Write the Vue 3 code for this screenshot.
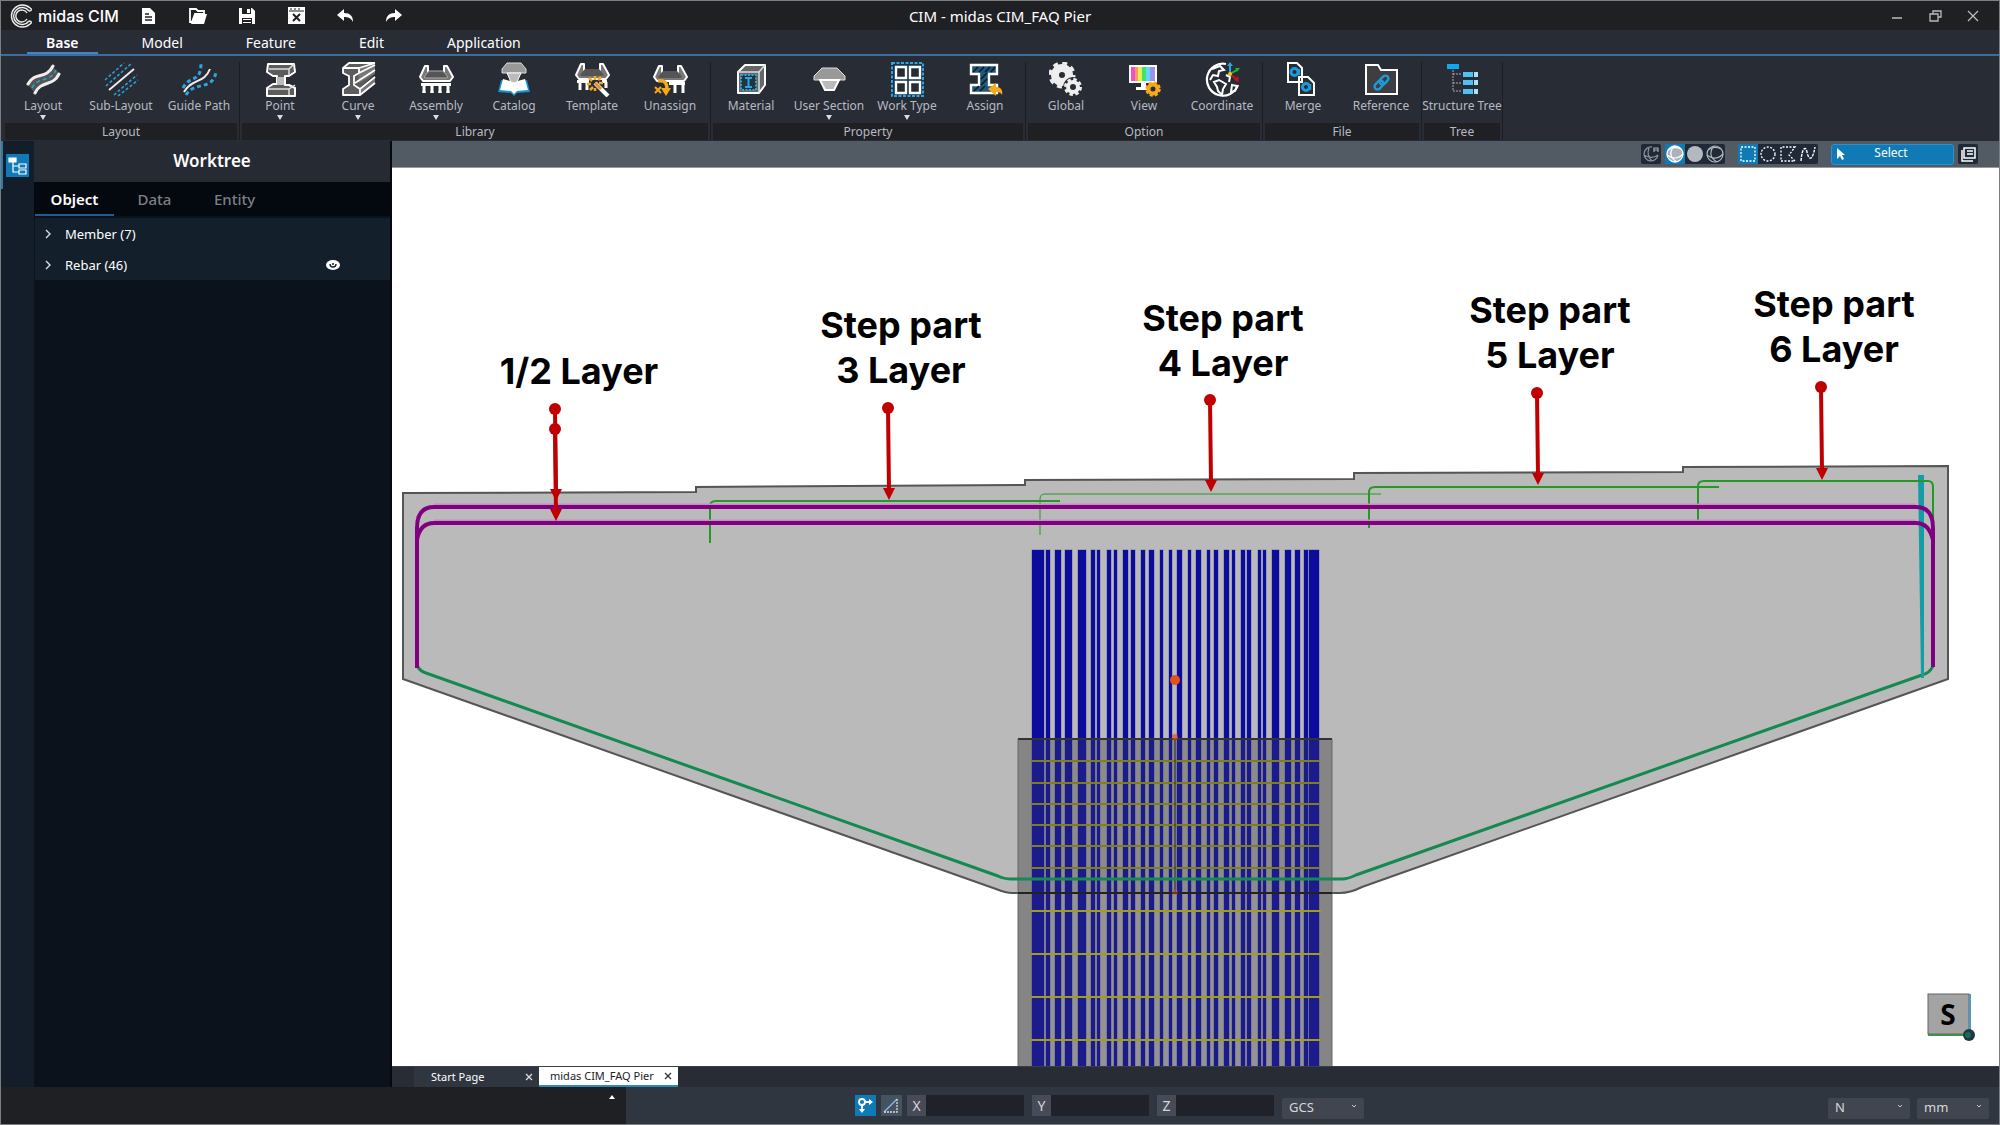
<script setup>
import { ref } from 'vue'

const icons = {
  layout: '<path d="M2 23C9 10 21 18 27 5l6 6C26 25 16 17 9 31z" fill="#555"/><path d="M2 22C9 9 20 18 27 4M9 31C15 18 27 25 33 12" fill="none" stroke="#eee" stroke-width="3" stroke-linecap="round"/><path d="M6 26C12 14 24 21 30 8" fill="none" stroke="#2b9fd4" stroke-width="1.6" stroke-dasharray="4 3"/>',
  sub: '<path d="M1 18L20 1M2 24L28 1M10 33L33 13M14 34L34 18" stroke="#2b9fd4" stroke-width="1.6" stroke-dasharray="3 2"/><path d="M5 28L30 7" stroke="#eee" stroke-width="1.8"/>',
  guide: '<path d="M1 26C8 12 19 22 19 1M4 33C12 19 32 29 34 9" fill="none" stroke="#2ba6e2" stroke-width="3" stroke-dasharray="4 3"/><path d="M2 30C10 16 22 22 28 7" fill="none" stroke="#eee" stroke-width="2"/>',
  point: '<path d="M5 2h26l1 8-6 4h-4v9h4l6 3v8H4v-8l6-4h4v-8h-4L4 10z" fill="#5c5c5c" stroke="#fff" stroke-width="2" stroke-linejoin="round"/><path d="M6 7h20l5-5M26 7v6M5 27h21l6-4M26 27v6" fill="none" stroke="#ddd" stroke-width="1.5"/><path d="M14 15h7v8h-7z" fill="#bbb"/>',
  curve: '<path d="M2 6L8 1h26v11L19 26v7H2v-6l6-4V13L2 11z" fill="#5c5c5c"/><path d="M17 7L34 1v10L18 21zM19 27l15-13v7L20 33z" fill="#777"/><path d="M2 6h16v5l-5 3v9l6 4v6H2v-6l6-4v-9l-6-3zM2 6l6-5h26M18 6l16-5M18 11L34 3M14 21L34 8M19 27l15-12M19 33l15-12" fill="none" stroke="#fff" stroke-width="1.8" stroke-linejoin="round"/>',
  assembly: '<path d="M6 4h3v6h16V4h3l6 11-3 4H4l-3-4z" fill="#777" stroke="#fff" stroke-width="2" stroke-linejoin="round"/><path d="M5 15L10 9h14l5 6-2 1H7z" fill="#555" stroke="#aaa"/><path d="M2 21h30v3H2z" fill="#fff"/><path d="M5 23v8M13 23v8M21 23v8M29 23v8" stroke="#fff" stroke-width="3"/><path d="M3 30h4M11 30h4M19 30h4M27 30h4" stroke="#fff"/>',
  catalog: '<path d="M1 30L4 18l13 3 13-3 3 12-13 1-3 3-3-3z" fill="#1592d4"/><path d="M3 28L6 17l11 3 11-3 3 11-11 1-3 3-3-3z" fill="#fff"/><path d="M10 1h14l5 6v4H5V7z" fill="#999" stroke="#ddd"/><path d="M10 11h14l-4 9-3 1-3-1z" fill="#bbb" stroke="#fff"/>',
  template: '<path d="M6 2h3v6h16V2h3l6 11-3 4H4l-3-4z" fill="#777" stroke="#fff" stroke-width="2" stroke-linejoin="round"/><path d="M5 13l5-6h14l5 6-2 1H7z" fill="#555"/><path d="M2 18h12v3H2zM27 18h5v3h-5z" fill="#fff"/><path d="M5 20v8M12 20v8M31 20v6" stroke="#fff" stroke-width="3"/><path d="M20 14v4M14 16l3 3M26 15l-3 3M12 22h4M24 21h4M15 28l3-3M20 26v3" stroke="#f7a81b" stroke-width="2.5"/><path d="M20 21l13 13" stroke="#fff" stroke-width="4"/><path d="M20 21l6 6" stroke="#e88a3c" stroke-width="3"/>',
  unassign: '<path d="M6 4h3v6h16V4h3l6 11-3 4H4l-3-4z" fill="#777" stroke="#fff" stroke-width="2" stroke-linejoin="round"/><path d="M5 15l5-6h14l5 6-2 1H7z" fill="#555"/><path d="M16 20h16v3H16z" fill="#fff"/><path d="M22 22v9M30 22v9" stroke="#fff" stroke-width="3"/><path d="M2 25l6 6M8 25l-6 6" stroke="#f7a81b" stroke-width="2"/><path d="M5 19c7-1 9 2 9 9" fill="none" stroke="#f7a81b" stroke-width="3.5"/><path d="M8 26h10l-5 8z" fill="#f7a81b"/>',
  material: '<path d="M4 10l7-7h20v20l-6 8H4z" fill="#666" stroke="#fff" stroke-width="2" stroke-linejoin="round"/><path d="M4 10h21v21M25 10l6-7" fill="none" stroke="#ddd" stroke-width="1.5"/><path d="M7 13h15v15H7z" fill="#26323c" stroke="#2ba6e2" stroke-width="2" stroke-dasharray="2 1.5"/><path d="M11 16h7M11 25h7M14.500 16v9" stroke="#2ba6e2" stroke-width="2"/>',
  section: '<path d="M10 6h15l8 8v4H2v-4z" fill="#999" stroke="#ddd"/><path d="M8 18h19l-5 10H13z" fill="#bbb" stroke="#fff" stroke-width="2"/>',
  work: '<path d="M2 1h31v33H2z" fill="#15334a" stroke="#2ba6e2" stroke-width="2" stroke-dasharray="3 1.500"/><path d="M6 5h10v11H6zM20 5h10v11H20zM6 20h10v11H6zM20 20h10v11H20z" fill="#282c35" stroke="#fff" stroke-width="2.400"/>',
  assign: '<path d="M3 3h26v9h-8v11h8v8H3v-8h8V12H3z" fill="#1f5878" stroke="#fff" stroke-width="2.400"/><path d="M5 10l5-5M11 10l5-5M17 10l5-5M23 10l4-5M13 17l6-6M13 23l6-6M6 29l5-5M12 29l5-5" stroke="#0b1a28" stroke-width="1.500"/><path d="M20 27l8-6v4c5 0 7 3 6 8-2-3-3-3-6-3v4z" fill="#f7a81b"/>',
  global: '<circle cx="13" cy="13" r="7" fill="#282c35" stroke="#eee" stroke-width="8"/><circle cx="13" cy="13" r="12" fill="none" stroke="#eee" stroke-width="3" stroke-dasharray="5 4.400"/><circle cx="24" cy="25" r="10" fill="#282c35"/><circle cx="24" cy="25" r="5" fill="none" stroke="#eee" stroke-width="4"/><circle cx="24" cy="25" r="7.500" fill="none" stroke="#eee" stroke-width="3" stroke-dasharray="3.400 2.500"/>',
  view: '<path d="M2 3h28v18H2z" fill="#fff"/><path d="M4 5h5v14H4z" fill="#f050d0"/><path d="M8 5h4v14H8z" fill="#f99a60"/><path d="M11 5h4v14h-4z" fill="#e8f050"/><path d="M15 5h4v14h-4z" fill="#45e070"/><path d="M19 5h4v14h-4z" fill="#60d8f8"/><path d="M23 5h5v14h-5z" fill="#a090f0"/><path d="M14 21h5v4h3v3H9v-3h5z" fill="#fff"/><circle cx="26" cy="27" r="4.500" fill="#282c35" stroke="#f7a81b" stroke-width="4"/><circle cx="26" cy="27" r="6.500" fill="none" stroke="#f7a81b" stroke-width="2.500" stroke-dasharray="3 2.100"/>',
  coordinate: '<path d="M21 2A16 16 0 1 0 33 23" fill="none" stroke="#fff" stroke-width="2.200"/><path d="M7 7l8-3 4 4-5 1-1 5-5-1-3 5M9 20l5-2 7 4-3 5-1 6-4-4-1-4zM21 13l4 2-1 5M27 23l5 1-2 5-4 1z" fill="none" stroke="#fff" stroke-width="2"/><path d="M25 12V3" stroke="#2ba6e2" stroke-width="2"/><path d="M25 12l7-4" stroke="#28b428" stroke-width="2"/><path d="M25 12l6 5" stroke="#c01515" stroke-width="2"/><path d="M25 0l3 4h-6z" fill="#2ba6e2"/><path d="M35 6l-5 0 2 4z" fill="#28b428"/><path d="M34 20l-1-6-4 4z" fill="#c01515"/><circle cx="25" cy="12" r="2" fill="#f7c81b"/>',
  merge: '<path d="M2 1h9l5 5v14H2zM13 15h9l6 6v12H13z" fill="#282c35" stroke="#fff" stroke-width="2"/><circle cx="8.500" cy="10" r="3.500" fill="none" stroke="#1e9ad8" stroke-width="3"/><circle cx="20" cy="25" r="3.500" fill="none" stroke="#1e9ad8" stroke-width="3"/><path d="M13 7v6M24 22v6" stroke="#1e9ad8" stroke-width="2.500"/>',
  reference: '<path d="M2 3h12l3 5h16v24H2z" fill="#3c3e42" stroke="#fff" stroke-width="2"/><g fill="none" stroke="#1e9ad8" stroke-width="2.400"><rect x="-5" y="-3" width="10" height="6" rx="3" transform="translate(15 23) rotate(-45)"/><rect x="-5" y="-3" width="10" height="6" rx="3" transform="translate(20 18) rotate(-45)"/></g>',
  structure: '<path d="M8 8v21h9M8 12h9M8 21h9" fill="none" stroke="#aaa" stroke-dasharray="2 1"/><path d="M2 2h12v5H2z" fill="#09a9f4"/><path d="M18 10h10v5H18zM18 18h10v5H18zM18 27h10v5H18z" fill="#4ec0f5"/><path d="M29 10h4v5h-4zM29 18h4v5h-4zM29 27h4v5h-4z" fill="#a8e2fb"/>'
}

const quick = [
  { label: 'New', svg: '<path d="M2 1h8l5 5v11H2z" fill="#fff"/><path d="M5 7h4M5 10h7M5 13h7" stroke="#1f2024" stroke-width="1.500"/>' },
  { label: 'Open', svg: '<path d="M1 2h6l2 2h6v3h-9l-3 8h-2z" fill="none" stroke="#fff" stroke-width="1.800"/><path d="M6 7h12l-3 10H2z" fill="#fff"/>' },
  { label: 'Save', svg: '<path d="M1 1h13l3 3v13H1z" fill="#fff"/><path d="M4 1h9v6H4zM4 11h10v6H4z" fill="#1f2024"/><path d="M9 2h3v4H9zM5 12h8v1H5zM5 15h8v1H5z" fill="#fff"/>' },
  { label: 'Close file', svg: '<path d="M1 0h17v17H1z" fill="#fff"/><path d="M2 4h15" stroke="#1f2024"/><path d="M3 2h2M7 2h2M11 2h2" stroke="#1f2024"/><path d="M6 7l7 7M13 7l-7 7" stroke="#1f2024" stroke-width="2"/>' },
  { label: 'Undo', svg: '<path d="M1 8l7-6v4c6 0 9 3 9 9-2-4-5-5-9-5v4z" fill="#fff"/>' },
  { label: 'Redo', svg: '<path d="M17 8l-7-6v4c-6 0-9 3-9 9 2-4 5-5 9-5v4z" fill="#fff"/>' }
]

const menus = ['Base', 'Model', 'Feature', 'Edit', 'Application']
const menu = ref('Base')

const groups = [
  { name: 'Layout', items: [['Layout', 'layout', true], ['Sub-Layout', 'sub'], ['Guide Path', 'guide']] },
  { name: 'Library', items: [['Point', 'point', true], ['Curve', 'curve', true], ['Assembly', 'assembly', true], ['Catalog', 'catalog'], ['Template', 'template'], ['Unassign', 'unassign']] },
  { name: 'Property', items: [['Material', 'material'], ['User Section', 'section', true], ['Work Type', 'work', true], ['Assign', 'assign']] },
  { name: 'Option', items: [['Global', 'global'], ['View', 'view'], ['Coordinate', 'coordinate']] },
  { name: 'File', items: [['Merge', 'merge'], ['Reference', 'reference']] },
  { name: 'Tree', items: [['Structure Tree', 'structure']] }
]

const globe = '<circle cx="10" cy="10" r="8"/><path d="M2 11c5 4 11 4 16-1M3 6c4-3 9-3 13-1M9 2c-5 6-4 12 3 16" fill="none"/>'
const viewTools = [
  [{ label: 'Auto shading', svg: '<g fill="none" stroke="#8a9099" stroke-width="1.300"><path d="M11 3A7 7 0 1 0 17 11M3 11c5 3 10 3 14 0M8 4c-2 5-1 9 3 13"/></g><path d="M13 8V4h4v4M13 6h4" fill="none" stroke="#b0a898" stroke-width="1.200"/>' }],
  [
    { label: 'Shaded with edges', on: true, svg: `<g fill="#aab2ba" stroke="#fff" stroke-width="1.300">${globe}</g>` },
    { label: 'Shaded', svg: '<circle cx="10" cy="10" r="8" fill="#b4b8bf"/>' },
    { label: 'Wireframe', svg: `<g fill="none" stroke="#b4b8bf" stroke-width="1.200">${globe}</g>` }
  ],
  [
    { label: 'Box selection', on: true, svg: '<path d="M3 3h14v14H3z" fill="none" stroke="#fff" stroke-width="1.300" stroke-dasharray="2 1.500"/>' },
    { label: 'Circle selection', svg: '<circle cx="10" cy="10" r="7" fill="none" stroke="#fff" stroke-width="1.300" stroke-dasharray="2 1.500"/>' },
    { label: 'Polygon selection', svg: '<path d="M17 3H3v14h14l-6-6z" fill="none" stroke="#fff" stroke-width="1.300" stroke-dasharray="2 1.500"/>' },
    { label: 'Curve selection', svg: '<path d="M3 17C4 3 8 2 9 8s5 12 8-5" fill="none" stroke="#fff" stroke-width="1.400" stroke-dasharray="3 1"/>' }
  ]
]

const panelTabs = ['Object', 'Data', 'Entity']
const panelTab = ref('Object')
const tree = [{ label: 'Member (7)' }, { label: 'Rebar (46)', visible: true }]

// Vertical rebar of the column: [left, width]
const bars = [[1032, 12], [1046, 4], [1055, 6], [1065, 7], [1078, 8], [1091, 4], [1097, 3], [1107, 4], [1114, 3], [1123, 5], [1131, 4], [1141, 4], [1149, 5], [1160, 3], [1169, 3], [1177, 5], [1188, 3], [1196, 5], [1207, 3], [1214, 4], [1224, 5], [1232, 3], [1241, 4], [1247, 4], [1258, 3], [1263, 3], [1272, 7], [1285, 6], [1295, 5], [1304, 4], [1309, 10]]
const hoopsInCap = [761, 783, 804, 825, 846, 868]
const hoopsBelow = [911, 954, 997, 1040]

const callouts = [
  { x: 579, y: 384, lines: ['1/2 Layer'], px: 555, py: 409, tip: 501 },
  { x: 901, y: 338, lines: ['Step part', '3 Layer'], px: 888, py: 408, tip: 500 },
  { x: 1223, y: 331, lines: ['Step part', '4 Layer'], px: 1210, py: 400, tip: 492 },
  { x: 1550, y: 323, lines: ['Step part', '5 Layer'], px: 1537, py: 393, tip: 485 },
  { x: 1834, y: 317, lines: ['Step part', '6 Layer'], px: 1821, py: 387, tip: 480 },
  { x: 0, y: 0, lines: [], px: 555, py: 429, tip: 521 }
]
const coords = ref({ X: '', Y: '', Z: '' })
</script>

<template>
  <div class="app">
    <header class="titlebar">
      <div class="brand">
        <svg width="24" height="26" viewBox="0 0 24 26" fill="none" stroke="#eee" stroke-width="1.4">
          <path d="M21 5A11 11 0 1 0 21 21M20 8A8.500 8.500 0 1 0 20 18M18 10A6 6 0 1 0 18 16" />
          <path d="M21 5c2 1 2 3-1 3M21 21c2-1 2-3-1-3" />
        </svg>
        <span>midas CIM</span>
      </div>
      <nav class="quick">
        <button v-for="q in quick" :key="q.label" :aria-label="q.label">
          <svg width="18" height="18" viewBox="0 0 18 18" v-html="q.svg" />
        </button>
      </nav>
      <h1>CIM - midas CIM_FAQ Pier</h1>
      <div class="window-buttons">
        <button aria-label="Minimize"><svg width="14" height="14"><path d="M2 9h10" stroke="#bbb" stroke-width="1.5" /></svg></button>
        <button aria-label="Restore"><svg width="14" height="14" fill="none" stroke="#bbb" stroke-width="1.3"><path d="M2 5h8v7H2zM5 5V2h8v6h-3" /></svg></button>
        <button aria-label="Close"><svg width="14" height="14"><path d="M2 2l10 10M12 2L2 12" stroke="#bbb" stroke-width="1.3" /></svg></button>
      </div>
    </header>

    <nav class="menubar">
      <button v-for="m in menus" :key="m" :class="{ active: m === menu }" @click="menu = m">{{ m }}</button>
    </nav>

    <section class="ribbon">
      <div v-for="g in groups" :key="g.name" class="group">
        <div class="tools">
          <button v-for="[label, icon, more] in g.items" :key="label" class="tool">
            <svg width="35" height="35" viewBox="0 0 35 35" v-html="icons[icon]" />
            <span>{{ label }}</span>
            <i v-if="more" class="more" />
          </button>
        </div>
        <div class="group-name">{{ g.name }}</div>
      </div>
    </section>

    <main class="workspace">
      <aside class="rail">
        <button aria-label="Worktree">
          <svg width="23" height="23" viewBox="0 0 23 23" fill="none" stroke="#fff" stroke-width="1.2">
            <path d="M3 4h7v4H3z" fill="#fff" /><path d="M7 8v10h6M7 12h6M13 10h7v4h-7zM13 16h7v4h-7z" />
          </svg>
        </button>
      </aside>
      <aside class="panel">
        <h2>Worktree</h2>
        <div class="panel-tabs">
          <button v-for="t in panelTabs" :key="t" :class="{ active: t === panelTab }" @click="panelTab = t">{{ t }}</button>
        </div>
        <ul class="tree">
          <li v-for="n in tree" :key="n.label">
            <button class="expand" :aria-label="'Expand ' + n.label"><svg width="8" height="10"><path d="M2 1l4 4-4 4" fill="none" stroke="#ddd" stroke-width="1.4" /></svg></button>
            <span>{{ n.label }}</span>
            <button v-if="n.visible" class="eye" aria-label="Visibility"><svg width="14" height="10" viewBox="0 0 14 10"><ellipse cx="7" cy="5" rx="7" ry="5" fill="#fff" /><path d="M4 4c0 4 6 4 6 0M6 4h2" fill="none" stroke="#141f2c" stroke-width="1.4" /></svg></button>
          </li>
        </ul>
      </aside>

      <section class="stage">
        <div class="viewbar">
          <div v-for="(set, i) in viewTools" :key="i" class="toolset">
            <button v-for="t in set" :key="t.label" :aria-label="t.label" :class="{ on: t.on }"><svg width="20" height="20" viewBox="0 0 20 20" v-html="t.svg" /></button>
          </div>
          <button class="select-mode">
            <svg width="10" height="14" viewBox="0 0 10 14"><path d="M1 1v11l3-3 2 4 2-1-2-4h3z" fill="#fff" /></svg>
            <span>Select</span>
          </button>
          <div class="toolset">
            <button aria-label="Windows"><svg width="20" height="20" viewBox="0 0 20 20" fill="none" stroke="#fff" stroke-width="1.5"><path d="M6 4h11v10H6zM4 6v11h11M9 7h6M9 10h6" /></svg></button>
          </div>
        </div>

        <svg class="scene" viewBox="392 168 1607 898" preserveAspectRatio="xMidYMid slice">
          <path d="M403 493L696 492V487L1025 485V480L1354 479V473L1683 472V467L1948 466V679L1362 887Q1350 893 1340 893H1012Q1006 893 996 889L403 679Z" fill="#bababa" stroke="#555" stroke-width="2" />
          <rect x="1018" y="739" width="314" height="154" fill="#8b8b8b" />
          <rect x="1018" y="893" width="314" height="180" fill="#939393" />
          <path d="M1018 739h14v340h-14zM1318 739h14v340h-14z" fill="#858585" />
          <g fill="#0c0c9c" stroke="#0c0c9c" stroke-opacity=".35">
            <rect v-for="[x, w] in bars" :key="x" :x="x" y="550" :width="w" height="189" />
          </g>
          <g fill="#1b1b8b" stroke="#1b1b8b" stroke-opacity=".35">
            <rect v-for="[x, w] in bars" :key="x" :x="x" y="739" :width="w" height="340" />
          </g>
          <path v-for="y in hoopsInCap" :key="y" :d="`M1032 ${y}h287`" stroke="#807c20" stroke-width="2" />
          <path v-for="y in hoopsBelow" :key="y" :d="`M1031 ${y}h290`" stroke="#a09c1c" stroke-width="2" />
          <path d="M1018 739h314" stroke="#333" stroke-width="2" />
          <path d="M1018 739v340M1332 739v340" stroke="#666" />
          <path d="M1175 739v154" stroke="#222" />
          <path d="M1018 893h314" stroke="#222" stroke-width="2" />
          <path d="M418 667Q420 671 426 673L998 876Q1004 879 1012 879H1342Q1348 879 1356 875L1922 675Q1930 673 1933 666" fill="none" stroke="#148a52" stroke-width="3" />
          <path d="M1918 475h6v203h-3z" fill="#149da4" />
          <g fill="none" stroke="#249a24">
            <path d="M710 543V506Q710 501 716 501H1060" stroke-width="2" />
            <path d="M1040 535V499Q1040 494 1045 494H1381" />
            <path d="M1369 528V492Q1369 487 1375 487H1719" stroke-width="2" />
            <path d="M1698 520V486Q1698 481 1704 481H1928Q1933 481 1933 487V522" stroke-width="2" />
          </g>
          <g fill="none" stroke="#c98ac9" stroke-width="5">
            <path d="M434 506H1916M434 522H1916" />
          </g>
          <g fill="none" stroke="#800080" stroke-width="4">
            <path d="M417 668V528Q417 507 434 507H1916Q1933 507 1933 528V667M417 540Q420 523 434 523H1916Q1929 523 1933 540" />
          </g>
          <g fill="#e2521b"><circle cx="1175" cy="680" r="5" /><circle cx="1175" cy="737" r="3" opacity=".7" /><circle cx="1175" cy="892" r="3" opacity=".4" /></g>

          <g v-for="c in callouts" :key="c.px + '-' + c.py">
            <g fill="#c00000">
              <circle :cx="c.px" :cy="c.py" r="6" />
              <path :d="`M${c.px - 2} ${c.py}h4l1 ${c.tip - c.py - 8}h-4zM${c.px - 5} ${c.tip - 12}h12l-6 12z`" />
            </g>
            <text v-for="(l, i) in c.lines" :key="l" :x="c.x" :y="c.y + i * 45" class="callout">{{ l }}</text>
          </g>

          <rect x="1928" y="994" width="41" height="40" fill="#a3a3a3" stroke="#666" />
          <path d="M1970 994v40" stroke="#4c9cc0" stroke-width="2" /><path d="M1928 1035h42" stroke="#3f8f4a" stroke-width="2" />
          <circle cx="1969" cy="1035" r="6" fill="#1f3848" /><circle cx="1968" cy="1035" r="3" fill="#1d6a50" />
          <text x="1948" y="1025" class="cube-face">S</text>
        </svg>

        <div class="doc-tabs">
          <div class="doc"><button class="name">Start Page</button><button aria-label="Close Start Page"><svg width="8" height="8"><path d="M1 1l6 6M7 1L1 7" stroke="#ddd" stroke-width="1.3" /></svg></button></div>
          <div class="doc active"><button class="name">midas CIM_FAQ Pier</button><button aria-label="Close midas CIM_FAQ Pier"><svg width="8" height="8"><path d="M1 1l6 6M7 1L1 7" stroke="#333" stroke-width="1.3" /></svg></button></div>
        </div>
      </section>
    </main>

    <footer class="status">
      <div class="log"><button aria-label="Expand log"><i /></button></div>
      <div class="controls">
        <button class="snap on" aria-label="Snap"><svg width="21" height="21" viewBox="0 0 21 21" fill="none" stroke="#fff" stroke-width="1.8"><circle cx="7" cy="7" r="3" /><path d="M10 7h5M7 10v5" /><path d="M14 4l4 3-4 3zM4 14h6l-3 4z" fill="#fff" stroke="none" /></svg></button>
        <button class="snap" aria-label="Work plane"><svg width="21" height="21" viewBox="0 0 21 21" fill="none"><path d="M3 17L16 4" stroke="#8ab4e8" stroke-width="1.5" /><path d="M16 4v13H3" stroke="#ddd" stroke-width="1.3" stroke-dasharray="2 1" /></svg></button>
        <label v-for="a in ['X', 'Y', 'Z']" :key="a" class="coord"><span>{{ a }}</span><input v-model="coords[a]" type="text" /></label>
        <div class="drop"><select aria-label="Coordinate system"><option>GCS</option></select><svg width="6" height="4"><path d="M1 1l2 2 2-2" /></svg></div>
      </div>
      <div class="units">
        <div class="drop"><select aria-label="Force unit"><option>N</option></select><svg width="6" height="4"><path d="M1 1l2 2 2-2" /></svg></div>
        <div class="drop length"><select aria-label="Length unit"><option>mm</option></select><svg width="6" height="4"><path d="M1 1l2 2 2-2" /></svg></div>
      </div>
    </footer>
  </div>
</template>

<style>
body { background: #1f2024; }
</style>

<style scoped>
* { box-sizing: border-box; }
.app {
  display: flex;
  flex-direction: column;
  height: 100vh;
  border: 1px solid #7b7d80;
  background: #282c35;
  color: #fff;
  font-family: "Noto Sans", sans-serif;
}
button {
  margin: 0;
  padding: 0;
  border: 0;
  background: none;
  color: inherit;
  font: inherit;
}
svg { display: block; flex: none; }
h1, h2, ul { margin: 0; padding: 0; font-weight: 400; list-style: none; }

.titlebar {
  display: grid;
  grid-template-columns: 1fr auto 1fr;
  grid-template-areas: "left title right";
  align-items: center;
  height: 29px;
  background: #1f2024;
}
.brand {
  grid-area: left;
  display: flex;
  align-items: center;
  gap: 5px;
  padding-left: 8px;
  font: 500 16px/24px Inter, sans-serif;
}
.quick { grid-area: left; display: flex; gap: 31px; margin-left: 139px; }
h1 { grid-area: title; font-size: 15px; line-height: 24px; }
.window-buttons { grid-area: right; display: flex; justify-content: flex-end; gap: 24px; padding-right: 19px; }

.menubar {
  display: flex;
  gap: 25px;
  height: 26px;
  padding-left: 26px;
  border-bottom: 2px solid #3d6c9f;
}
.menubar button { padding: 2px 19px 0; font-size: 14px; line-height: 22px; }
.menubar .active { font-weight: 600; border-bottom: 2px solid #4684c8; }

.ribbon { display: flex; height: 85px; padding: 6px 0 1px 2px; }
.group { display: flex; flex-direction: column; padding: 0 1px; border-right: 1px solid #1a1d23; }
.tools { display: flex; flex: 1; }
.tool { display: flex; flex-direction: column; align-items: center; width: 78px; color: #b6bac2; font-size: 12px; line-height: 18px; white-space: nowrap; }
.more { width: 0; border: 3px solid transparent; border-top: 5px solid #ddd; border-bottom: 0; }
.group-name { height: 17px; margin: 0 1px; background: #1f2024; color: #b6bac2; font-size: 12px; line-height: 17px; text-align: center; }

.workspace { display: flex; flex: 1; min-height: 0; }
.rail { width: 33px; background: #141e2a; }
.rail::before { content: ""; float: left; width: 2px; height: 48px; background: #2c7cab; }
.rail button { display: block; margin: 13px 0 0 5px; background: #0f7ab5; }
.panel { display: flex; flex-direction: column; width: 358px; border-right: 2px solid #05090f; background: #0b121c; }
h2 { height: 41px; background: #262a33; font-size: 17px; font-weight: 600; line-height: 40px; text-align: center; }
.panel-tabs { display: flex; gap: 1px; height: 34px; padding-left: 1px; background: #04090f; }
.panel-tabs button { width: 79px; border-bottom: 2px solid transparent; color: #7c7f83; font-size: 15px; font-weight: 500; line-height: 34px; }
.panel-tabs .active { border-color: #28598f; color: #fff; font-weight: 600; }
.tree { margin: 2px 0 0 1px; }
.tree li { display: flex; align-items: center; height: 31px; padding-left: 9px; background: #141f2c; font-size: 13px; }
.tree span { flex: 1; margin-left: 13px; }
.eye { margin-right: 50px; }

.stage { display: flex; flex: 1; flex-direction: column; min-width: 0; }
.viewbar { display: flex; align-items: center; justify-content: flex-end; height: 27px; padding-right: 21px; border-bottom: 1px solid #999; background: #525a63; }
.toolset { display: flex; margin-left: 4px; border-radius: 2px; background: #1f2937; }
.toolset + .toolset + .toolset { margin-left: 13px; }
.toolset .on { background: #0f7ab5; }
.select-mode { display: flex; align-items: center; width: 123px; height: 21px; margin-left: 13px; padding: 0 4px; border: 1px solid #2f8fd0; border-radius: 3px; background: #0f7ab5; font-size: 12px; line-height: 16px; }
.select-mode span { flex: 1; padding: 0 13px 2px 0; }
.scene { flex: 1; width: 100%; min-height: 0; background: #fff; }
.callout { font: 700 36px Inter, sans-serif; text-anchor: middle; }
.cube-face { font: 700 28px "Noto Sans", sans-serif; text-anchor: middle; }

.doc-tabs { display: flex; height: 21px; padding-left: 22px; border-top: 1px solid #3a3e46; background: #282c35; }
.doc { display: flex; align-items: center; justify-content: space-between; width: 125px; padding: 0 6px 0 17px; background: #303640; font-size: 11px; line-height: 18px; }
.doc.active { width: 139px; padding: 0 6px 0 11px; border-bottom: 2px solid #2b8bb8; background: #fff; color: #222; }
.doc .name { white-space: nowrap; }

.status { display: flex; height: 37px; background: #303640; }
.log { width: 625px; padding: 8px 11px 0 0; background: #1f2024; }
.log button { display: block; margin-left: auto; }
.log i { display: block; border: 3px solid transparent; border-bottom: 4px solid #fff; border-top: 0; }
.controls, .units { display: flex; align-items: flex-start; padding-top: 8px; }
.controls { flex: 1; padding-left: 229px; }
.units { gap: 7px; padding-right: 10px; }
.snap { margin-right: 5px; background: #455260; }
.snap.on { background: #0f7ab5; }
.coord { display: flex; height: 21px; margin-right: 8px; color: #d5d7da; font-size: 14px; line-height: 21px; text-align: center; }
.coord span { width: 19px; background: #474b57; }
.coord input { width: 98px; border: 0; background: #1f2329; color: #fff; }
.drop { position: relative; width: 82px; height: 21px; }
.drop.length { width: 72px; }
.drop select { appearance: none; width: 100%; height: 100%; padding: 0 7px 3px; border: 0; border-radius: 2px; background: #414550; color: #d5d7da; font: 13px/18px "Noto Sans", sans-serif; }
.drop svg { position: absolute; top: 9px; right: 7px; fill: none; stroke: #c5c7ca; }
</style>
